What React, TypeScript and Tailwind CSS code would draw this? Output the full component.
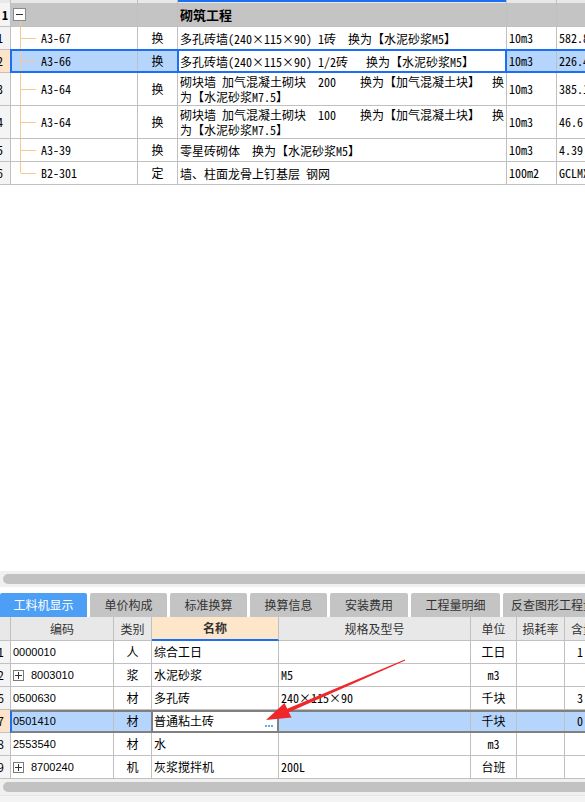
import React from 'react';

const mono = "font-[family-name:'Noto_Sans_Mono_CJK_SC','Noto_Sans_CJK_SC',monospace]";
const sans = "font-[family-name:'Noto_Sans_CJK_SC',sans-serif]";
const num = "font-[family-name:'Liberation_Sans','Noto_Sans_CJK_SC',sans-serif]";

interface TopRow {
  n: string;
  code: string;
  t: string;
  name: string[];
  unit: string;
  qty: string;
  h: string;
  sel?: boolean;
  last?: boolean;
}

const topRows: TopRow[] = [
  { n: '1', code: 'A3-67', t: '换', name: ['多孔砖墙(240×115×90) 1砖  换为【水泥砂浆M5】'], unit: '10m3', qty: '582.82', h: 'h-[23px]' },
  { n: '2', code: 'A3-66', t: '换', name: ['多孔砖墙(240×115×90) 1/2砖   换为【水泥砂浆M5】'], unit: '10m3', qty: '226.44', h: 'h-[23px]', sel: true },
  { n: '3', code: 'A3-64', t: '换', name: ['砌块墙 加气混凝土砌块  200    换为【加气混凝土块】  换', '为【水泥砂浆M7.5】'], unit: '10m3', qty: '385.12', h: 'h-[33px]' },
  { n: '4', code: 'A3-64', t: '换', name: ['砌块墙 加气混凝土砌块  100    换为【加气混凝土块】  换', '为【水泥砂浆M7.5】'], unit: '10m3', qty: '46.6', h: 'h-[33px]' },
  { n: '5', code: 'A3-39', t: '换', name: ['零星砖砌体  换为【水泥砂浆M5】'], unit: '10m3', qty: '4.39', h: 'h-[23px]' },
  { n: '6', code: 'B2-301', t: '定', name: ['墙、柱面龙骨上钉基层 钢网'], unit: '100m2', qty: 'GCLMXHJ', h: 'h-[23px]', last: true },
];

const bottomRows = [
  { n: '1', code: '0000010', t: '人', name: '综合工日', spec: '', unit: '工日', qty: '1' },
  { n: '2', code: '8003010', t: '浆', name: '水泥砂浆', spec: 'M5', unit: 'm3', qty: '', plus: true },
  { n: '6', code: '0500630', t: '材', name: '多孔砖', spec: '240×115×90', unit: '千块', qty: '3' },
  { n: '7', code: '0501410', t: '材', name: '普通粘土砖', spec: '', unit: '千块', qty: '0', sel: true },
  { n: '8', code: '2553540', t: '材', name: '水', spec: '', unit: 'm3', qty: '' },
  { n: '9', code: '8700240', t: '机', name: '灰浆搅拌机', spec: '200L', unit: '台班', qty: '', plus: true },
];

const tabs = [
  { label: '单价构成', w: 'w-[77px]' },
  { label: '标准换算', w: 'w-[77px]' },
  { label: '换算信息', w: 'w-[77px]' },
  { label: '安装费用', w: 'w-[78px]' },
  { label: '工程量明细', w: 'w-[89px]' },
  { label: '反查图形工程量', w: 'w-[100px]' },
];

function TopGrid() {
  return (
    <div className={`text-[12px] text-black ${mono}`}>
      {/* header strip, mostly scrolled away */}
      <div className="flex h-[3px]">
        <div className="w-[11px] shrink-0 bg-[#e8e8e8] border-r border-[#c0c0c0]" />
        <div className="w-[127px] shrink-0 bg-[#e8e8e8] border-r border-[#c0c0c0]" />
        <div className="w-[40px] shrink-0 bg-[#e8e8e8] border-r border-[#c0c0c0]" />
        <div className="w-[329px] shrink-0 flex flex-col border-r border-[#c0c0c0]">
          <div className="h-[2px] bg-[#1c6ef2]" />
          <div className="flex-1 bg-[#e8e8e8]" />
        </div>
        <div className="w-[50px] shrink-0 bg-[#e8e8e8] border-r border-[#c0c0c0]" />
        <div className="w-[80px] shrink-0 bg-[#e8e8e8]" />
      </div>

      {/* group row */}
      <div className="flex h-[24px]">
        <div className="w-[11px] shrink-0 bg-[#f4f4f4] border-r border-b border-[#c0c0c0] pl-[2px] flex items-center font-bold">1</div>
        <div className="w-[127px] shrink-0 bg-[#c4c4c4] border-r border-b border-[#c0c0c0] flex flex-col">
          <div className="pl-[2px] pt-[5px]">
            <div className="w-[13px] h-[13px] border border-[#8a8a8a] bg-white flex items-center justify-center">
              <div className="w-[7px] h-px bg-[#333]" />
            </div>
          </div>
          <div className="ml-[9px] w-px flex-1 bg-[#f8c890]" />
        </div>
        <div className="w-[40px] shrink-0 bg-[#c4c4c4] border-r border-b border-[#c0c0c0]" />
        <div className="w-[329px] shrink-0 bg-[#c4c4c4] border-r border-b border-[#c0c0c0] pl-[2px] flex items-center font-bold text-[13px]">砌筑工程</div>
        <div className="w-[50px] shrink-0 bg-[#c4c4c4] border-r border-b border-[#c0c0c0]" />
        <div className="w-[80px] shrink-0 bg-[#c4c4c4] border-b border-[#c0c0c0]" />
      </div>

      {topRows.map((r) => (
        <div key={r.n} className={`relative flex ${r.h}`}>
          <div className={`w-[11px] shrink-0 overflow-hidden border-r border-b border-[#c0c0c0] flex items-center justify-end pr-[7px] ${r.sel ? 'bg-[#fde4c8]' : 'bg-[#f4f4f4]'}`}>
            <span className="shrink-0">{r.n}</span>
          </div>
          <div className={`w-[127px] shrink-0 border-r border-b border-[#c0c0c0] flex ${r.sel ? 'bg-[#b5d5fd]' : 'bg-white'}`}>
            <div className="w-[9px] shrink-0" />
            <div className="w-px shrink-0 flex flex-col">
              <div className="flex-1 bg-[#f8c890]" />
              {r.last && <div className="flex-1" />}
            </div>
            <div className="w-[15px] shrink-0 flex items-center">
              <div className="h-px w-full bg-[#f8c890]" />
            </div>
            <div className="pl-[5px] flex items-center">{r.code}</div>
          </div>
          <div className={`w-[40px] shrink-0 border-r border-b border-[#c0c0c0] flex items-center justify-center ${r.sel ? 'bg-[#b5d5fd]' : 'bg-white'}`}>
            {r.t}
          </div>
          <div className="relative w-[329px] shrink-0 border-r border-b border-[#c0c0c0] bg-white pl-[2px] flex flex-col justify-center leading-[15px]">
            {r.name.map((l, i) => (
              <div key={i} className="whitespace-pre">{l}</div>
            ))}
            {r.sel && <div className="absolute top-0 bottom-0 -left-px -right-px border-x-2 border-[#1c6ef2] pointer-events-none" />}
          </div>
          <div className={`w-[50px] shrink-0 border-r border-b border-[#c0c0c0] pl-[2px] flex items-center ${r.sel ? 'bg-[#b5d5fd]' : 'bg-white'}`}>
            {r.unit}
          </div>
          <div className={`w-[80px] shrink-0 border-b border-[#c0c0c0] pl-[2px] flex items-center ${r.sel ? 'bg-[#b5d5fd]' : 'bg-white'}`}>
            {r.qty}
          </div>
          {r.sel && <div className="absolute left-[10px] right-0 top-[-1px] bottom-0 border-2 border-r-0 border-[#1c6ef2] pointer-events-none" />}
        </div>
      ))}
    </div>
  );
}

function Scrollbar() {
  return (
    <div className="h-[16px] bg-[#f0f0f0] pt-[3px] pl-[3px]">
      <div className="h-[10px] w-[600px] rounded-full bg-[#c2c2c2]" />
    </div>
  );
}

function Tabs() {
  return (
    <div className={`flex h-[24px] gap-[3px] text-[12px] ${sans}`}>
      <div className="w-[87px] shrink-0 rounded-t-[2px] bg-[#4d9ff6] text-white flex items-center justify-center">工料机显示</div>
      {tabs.map((t) => (
        <div key={t.label} className={`${t.w} shrink-0 rounded-t-[2px] bg-[#c4c4c4] text-[#333] flex items-center justify-center whitespace-nowrap`}>
          {t.label}
        </div>
      ))}
    </div>
  );
}

function PlusBox() {
  return (
    <div className="w-[11px] h-[11px] border border-[#7a7a7a] bg-white flex items-center justify-center relative shrink-0">
      <div className="absolute w-[7px] h-px bg-[#333]" />
      <div className="absolute w-px h-[7px] bg-[#333]" />
    </div>
  );
}

function BottomGrid() {
  const cell = 'border-r border-b border-[#c0c0c0] flex items-center shrink-0';
  return (
    <div className={`text-[12px] text-black ${sans}`}>
      <div className="flex h-[24px] bg-[#e8e8e8] text-[#333]">
        <div className={`${cell} w-[11px]`} />
        <div className={`${cell} w-[103px] justify-center`}>编码</div>
        <div className={`${cell} w-[38px] justify-center`}>类别</div>
        <div className="w-[127px] shrink-0 border-r border-[#c0c0c0] border-b-2 border-b-[#1c6ef2] bg-[#fde6c9] font-bold flex items-center justify-center">名称</div>
        <div className={`${cell} w-[192px] justify-center`}>规格及型号</div>
        <div className={`${cell} w-[46px] justify-center`}>单位</div>
        <div className={`${cell} w-[48px] justify-center`}>损耗率</div>
        <div className={`${cell} w-[40px] pl-[6px]`}>含量</div>
      </div>
      {bottomRows.map((r) => (
        <div key={r.n} className="relative flex h-[23px]">
          <div className={`${cell} w-[11px] overflow-hidden justify-end pr-[6px] ${r.sel ? 'bg-[#fde4c8]' : 'bg-[#f4f4f4]'}`}>
            <span className="shrink-0">{r.n}</span>
          </div>
          <div className={`${cell} w-[103px] pl-[2px] gap-[7px] ${num} text-[11px] ${r.sel ? 'bg-[#b5d5fd]' : 'bg-white'}`}>
            {r.plus && <PlusBox />}
            {r.code}
          </div>
          <div className={`${cell} w-[38px] justify-center ${r.sel ? 'bg-[#b5d5fd]' : 'bg-white'}`}>{r.t}</div>
          <div className={`${cell} relative w-[127px] pl-[2px] bg-white`}>
            {r.name}
            {r.sel && (
              <>
                <span className="ml-auto mr-[5px] mt-[9px] flex gap-[1px]">
                  <i className="w-[2px] h-[2px] bg-[#6aa8e8]" />
                  <i className="w-[2px] h-[2px] bg-[#6aa8e8]" />
                  <i className="w-[2px] h-[2px] bg-[#6aa8e8]" />
                </span>
                <div className="absolute top-0 bottom-[-1px] -left-px -right-px border-2 border-[#808080] pointer-events-none" />
              </>
            )}
          </div>
          <div className={`${cell} w-[192px] pl-[2px] ${mono} ${r.sel ? 'bg-[#b5d5fd]' : 'bg-white'}`}>{r.spec}</div>
          <div className={`${cell} w-[46px] justify-center ${r.sel ? 'bg-[#b5d5fd]' : 'bg-white'}`}>
            <span className={r.unit === 'm3' ? mono : ''}>{r.unit}</span>
          </div>
          <div className={`${cell} w-[48px] ${r.sel ? 'bg-[#b5d5fd]' : 'bg-white'}`} />
          <div className={`${cell} w-[30px] justify-end pr-[11px] ${mono} ${r.sel ? 'bg-[#b5d5fd]' : 'bg-white'}`}>{r.qty}</div>
          {r.sel && <div className="absolute left-[10px] right-0 top-0 bottom-0 border-y-2 border-[#808080] border-l-2 border-l-[#1c6ef2] pointer-events-none" />}
        </div>
      ))}
    </div>
  );
}

export default function App() {
  return (
    <div className="relative w-[585px] h-[802px] overflow-hidden bg-white flex flex-col">
      <div className="h-[571px] shrink-0 overflow-hidden">
        <TopGrid />
      </div>
      <Scrollbar />
      <div className="h-[6px] shrink-0 bg-white" />
      <Tabs />
      <BottomGrid />
      <Scrollbar />
      <div className="flex-1 bg-[#f4f4f4] border-t border-[#e6e6e6]" />

      {/* red annotation arrow */}
      <svg className="absolute left-0 top-0 pointer-events-none" width="585" height="802" viewBox="0 0 585 802">
        <polygon
          points="266,720 291.5,717.5 288.8,712.3 405.2,660.5 404.8,659.5 287.2,708.7 284.5,703"
          fill="#f0262a"
        />
      </svg>
    </div>
  );
}
